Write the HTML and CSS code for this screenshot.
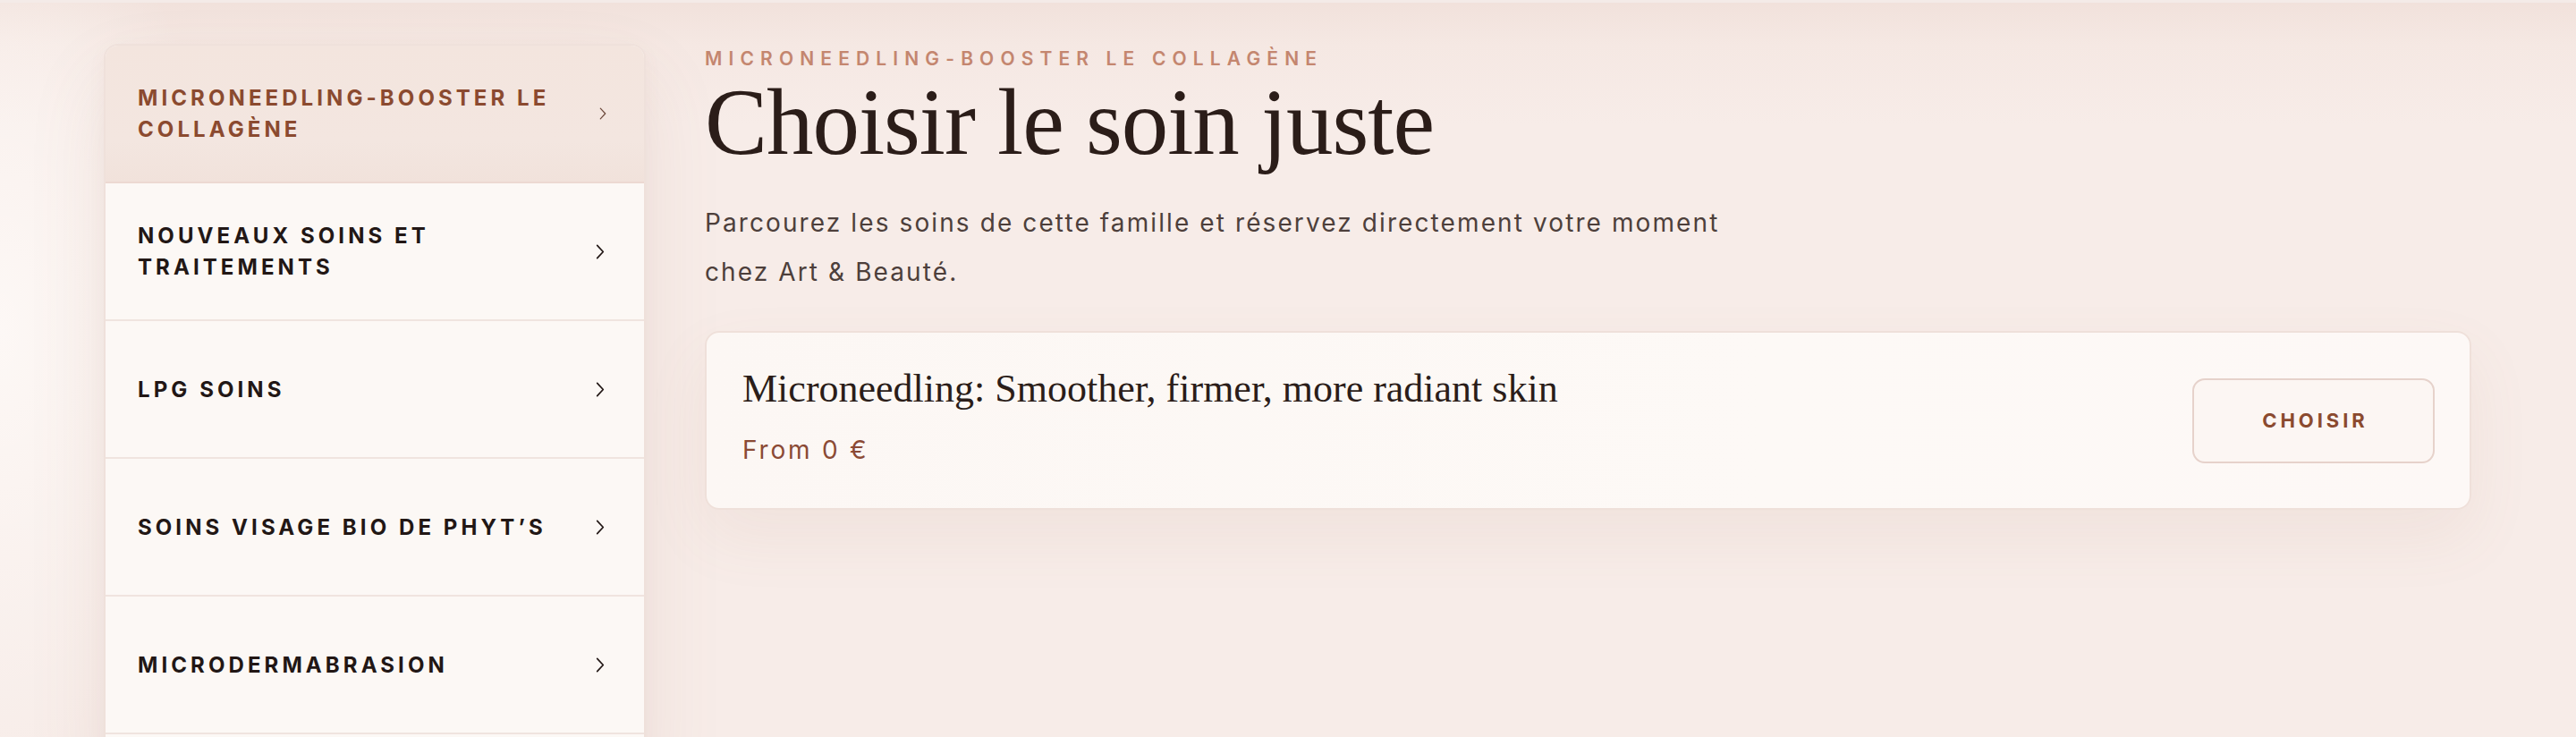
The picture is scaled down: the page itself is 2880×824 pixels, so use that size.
FILE: index.html
```html
<!DOCTYPE html>
<html lang="fr">
<head>
<meta charset="utf-8">
<title>Choisir le soin juste</title>
<link rel="stylesheet" href="styles.css">
</head>
<body>
<div class="page">
  <nav class="families">
    <a class="family is-active" href="#">
      <span class="family-label">Microneedling-Booster le collagène</span>
      <svg class="chev" viewBox="0 0 10 18" aria-hidden="true"><path d="M1.5 1.5 L8.5 9 L1.5 16.5"/></svg>
    </a>
    <a class="family" href="#">
      <span class="family-label">Nouveaux soins et traitements</span>
      <svg class="chev" viewBox="0 0 10 18" aria-hidden="true"><path d="M1.5 1.5 L8.5 9 L1.5 16.5"/></svg>
    </a>
    <a class="family" href="#">
      <span class="family-label">LPG soins</span>
      <svg class="chev" viewBox="0 0 10 18" aria-hidden="true"><path d="M1.5 1.5 L8.5 9 L1.5 16.5"/></svg>
    </a>
    <a class="family" href="#">
      <span class="family-label">Soins visage bio de Phyt’s</span>
      <svg class="chev" viewBox="0 0 10 18" aria-hidden="true"><path d="M1.5 1.5 L8.5 9 L1.5 16.5"/></svg>
    </a>
    <a class="family" href="#">
      <span class="family-label">Microdermabrasion</span>
      <svg class="chev" viewBox="0 0 10 18" aria-hidden="true"><path d="M1.5 1.5 L8.5 9 L1.5 16.5"/></svg>
    </a>
    <div class="family-more" aria-hidden="true"></div>
  </nav>

  <main class="content">
    <p class="eyebrow">Microneedling-Booster le collagène</p>
    <h1 class="title">Choisir le soin juste</h1>
    <p class="lead">Parcourez les soins de cette famille et réservez directement votre moment chez Art &amp; Beauté.</p>

    <article class="service">
      <div class="service-info">
        <h2 class="service-name">Microneedling: Smoother, firmer, more radiant skin</h2>
        <p class="service-price">From 0 €</p>
      </div>
      <button class="choose" type="button">Choisir</button>
    </article>
  </main>
</div>
</body>
</html>
```

FILE: styles.css
```css
html, body {
  margin: 0;
  padding: 0;
}

body {
  height: 824px;
  overflow: hidden;
  font-family: "Inter", "Liberation Sans", sans-serif;
  color: #2b1d19;
  background:
    radial-gradient(ellipse 260px 520px at 0 45%, rgba(255, 252, 250, 0.75), rgba(255, 252, 250, 0) 100%),
    linear-gradient(180deg, #f1e1db 0, #f5e8e3 50px, #f7ece8 140px, #f7ece8 100%);
  border-top: 3px solid #f4ebe8;
  box-sizing: border-box;
}

.page {
  display: grid;
  grid-template-columns: 606px 1fr;
  column-gap: 66px;
  padding: 46px 117px 0 116px;
  align-items: start;
}

/* ---------- sidebar ---------- */
.families {
  display: flex;
  flex-direction: column;
  background: #fcf8f5;
  border: 2px solid #efe1db;
  border-radius: 16px;
  overflow: hidden;
  box-shadow: 0 40px 90px rgba(160, 110, 90, 0.10), 0 6px 20px rgba(160, 110, 90, 0.05);
}

.family {
  display: flex;
  align-items: center;
  height: 152px;
  padding: 0 44px 0 36px;
  gap: 20px;
  text-decoration: none;
  color: #221715;
  border-bottom: 2px solid #f0e4df;
  flex-shrink: 0;
}

.family-more {
  height: 40px;
  flex-shrink: 0;
}

.family.is-active {
  background: linear-gradient(180deg, #f3e5de 0%, #f3e6e0 70%, #f1e2db 100%);
  color: #8b4a2f;
  border-bottom-color: #ecd9d2;
}

.family-label {
  flex: 1;
  max-width: 505px;
  font-size: 24px;
  font-weight: 700;
  line-height: 35px;
  letter-spacing: 0.17em;
  text-transform: uppercase;
}

.chev {
  width: 10px;
  height: 17px;
  flex-shrink: 0;
  fill: none;
  stroke: #221715;
  stroke-width: 1.8;
  stroke-linecap: round;
  stroke-linejoin: round;
}

.family.is-active .chev {
  width: 8px;
  height: 14px;
  margin-right: -2px;
  stroke: #6d4a3d;
  stroke-width: 1.6;
}

/* ---------- main ---------- */
.content {
  display: flex;
  flex-direction: column;
}

.eyebrow {
  margin: 3px 0 0;
  font-size: 21px;
  line-height: 28px;
  font-weight: 600;
  letter-spacing: 0.34em;
  text-transform: uppercase;
  color: #c4866f;
}

.title {
  margin: 0;
  font-family: "Liberation Serif", "Times New Roman", serif;
  font-weight: 400;
  font-size: 105px;
  line-height: 114px;
  color: #2b1d19;
  letter-spacing: -0.01em;
}

.lead {
  margin: 28px 0 0;
  max-width: 1190px;
  font-size: 28px;
  line-height: 55px;
  font-weight: 400;
  letter-spacing: 0.075em;
  color: #4d3f3b;
}

.service {
  margin-top: 38px;
  height: 200px;
  box-sizing: border-box;
  display: flex;
  align-items: center;
  justify-content: space-between;
  padding: 0 39px 0 40px;
  background: linear-gradient(90deg, #fcf7f4 0%, #fdf9f6 60%, #fdf8f6 100%);
  border: 2px solid #efe0da;
  border-radius: 16px;
  box-shadow: 0 30px 70px rgba(160, 110, 90, 0.08);
}

.service-info {
  padding-bottom: 10px;
}

.service-name {
  margin: 0;
  font-family: "Liberation Serif", "Times New Roman", serif;
  font-weight: 400;
  font-size: 44px;
  line-height: 52px;
  color: #2b1d19;
}

.service-price {
  margin: 24px 0 0;
  font-size: 28px;
  line-height: 36px;
  letter-spacing: 0.1em;
  color: #8b4a35;
}

.choose {
  width: 271px;
  height: 95px;
  box-sizing: border-box;
  background: #fcf6f3;
  border: 2px solid #e6d2cb;
  border-radius: 14px;
  font-family: "Inter", "Liberation Sans", sans-serif;
  font-size: 22px;
  font-weight: 700;
  letter-spacing: 0.18em;
  text-transform: uppercase;
  color: #8b4a2f;
  padding: 0 0 0 0.18em;
  cursor: pointer;
}
```
